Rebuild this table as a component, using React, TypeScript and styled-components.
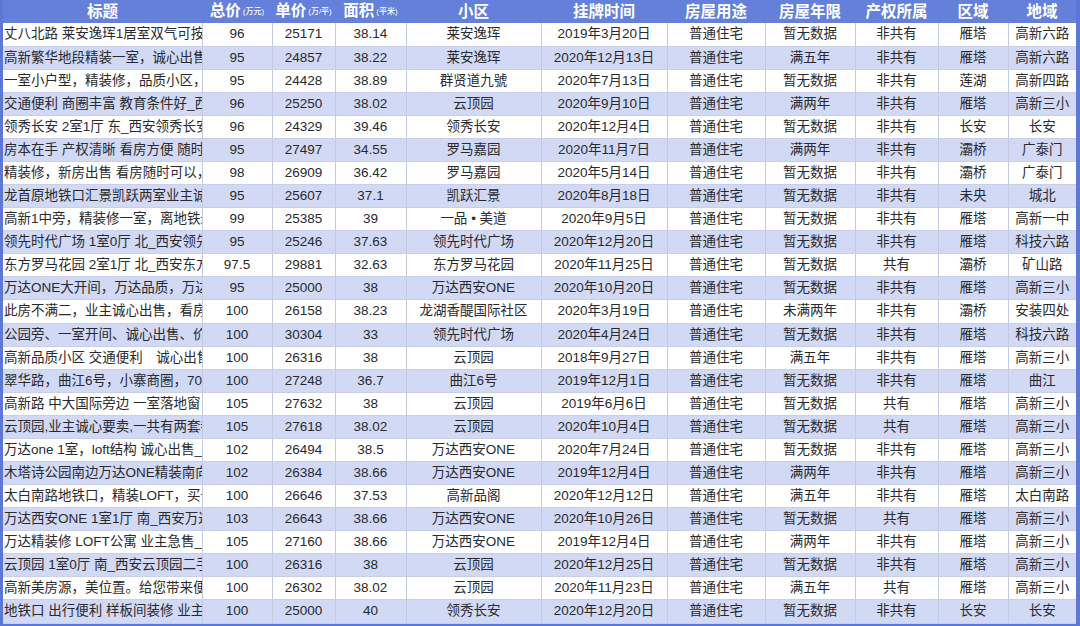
import React from 'react';
import styled, { createGlobalStyle } from 'styled-components';

const GlobalStyle = createGlobalStyle`
  html, body {
    margin: 0;
    padding: 0;
    background: #ffffff;
  }
  body {
    font-family: "Liberation Sans", "Noto Sans CJK SC", sans-serif;
  }
`;

const Frame = styled.div`
  width: 1080px;
  height: 626px;
  box-sizing: border-box;
  padding: 0 4px 4px 3px;
  background: #5d77d6;
  overflow: hidden;
`;

const Table = styled.table`
  width: 1073px;
  table-layout: fixed;
  border-collapse: collapse;
  border-spacing: 0;
  color: #2a2a2e;
`;

const HeadRow = styled.tr`
  height: 22px;
  background: #6480da;
`;

const HeadCell = styled.th`
  padding: 0;
  font-size: 15.5px;
  font-weight: 600;
  color: #ffffff;
  text-align: center;
  white-space: nowrap;
  overflow: hidden;
  line-height: 22px;
`;

const Unit = styled.span`
  font-size: 8px;
  font-weight: 500;
  margin-left: 2px;
  vertical-align: 2px;
`;

const Row = styled.tr<{ $alt: boolean }>`
  height: 23.08px;
  background: ${p => (p.$alt ? '#d1d9f5' : '#ffffff')};
`;

const Cell = styled.td<{ $left?: boolean }>`
  padding: ${p => (p.$left ? '0 0 0 1px' : '0')};
  font-size: 13.5px;
  line-height: 22px;
  text-align: ${p => (p.$left ? 'left' : 'center')};
  white-space: nowrap;
  overflow: hidden;
  text-overflow: clip;
  border-right: 1px solid #c4cae2;
  border-bottom: 1px solid #c9cfe8;
  &:last-child {
    border-right: none;
  }
`;

const columns: { title: string; unit?: string; width: number }[] = [
  { title: '标题', width: 199 },
  { title: '总价', unit: '(万元)', width: 70 },
  { title: '单价', unit: '(万/平)', width: 63 },
  { title: '面积', unit: '(平米)', width: 71 },
  { title: '小区', width: 135 },
  { title: '挂牌时间', width: 126 },
  { title: '房屋用途', width: 98 },
  { title: '房屋年限', width: 90 },
  { title: '产权所属', width: 83 },
  { title: '区域', width: 70 },
  { title: '地域', width: 68 },
];

// 标题, 总价, 单价, 面积, 小区, 挂牌时间, 年限, 产权, 区域, 地域
const rows: string[][] = [
  ['丈八北路 莱安逸珲1居室双气可按揭', '96', '25171', '38.14', '莱安逸珲', '2019年3月20日', '暂无数据', '非共有', '雁塔', '高新六路'],
  ['高新繁华地段精装一室，诚心出售', '95', '24857', '38.22', '莱安逸珲', '2020年12月13日', '满五年', '非共有', '雁塔', '高新六路'],
  ['一室小户型，精装修，品质小区，', '95', '24428', '38.89', '群贤道九號', '2020年7月13日', '暂无数据', '非共有', '莲湖', '高新四路'],
  ['交通便利 商圈丰富 教育条件好_西安', '96', '25250', '38.02', '云顶园', '2020年9月10日', '满两年', '非共有', '雁塔', '高新三小'],
  ['领秀长安 2室1厅 东_西安领秀长安', '96', '24329', '39.46', '领秀长安', '2020年12月4日', '暂无数据', '非共有', '长安', '长安'],
  ['房本在手 产权清晰 看房方便 随时看', '95', '27497', '34.55', '罗马嘉园', '2020年11月7日', '满两年', '非共有', '灞桥', '广泰门'],
  ['精装修，新房出售 看房随时可以，', '98', '26909', '36.42', '罗马嘉园', '2020年5月14日', '暂无数据', '非共有', '灞桥', '广泰门'],
  ['龙首原地铁口汇景凯跃两室业主诚心', '95', '25607', '37.1', '凯跃汇景', '2020年8月18日', '暂无数据', '非共有', '未央', '城北'],
  ['高新1中旁，精装修一室，离地铁近', '99', '25385', '39', '一品 • 美道', '2020年9月5日', '暂无数据', '非共有', '雁塔', '高新一中'],
  ['领先时代广场 1室0厅 北_西安领先', '95', '25246', '37.63', '领先时代广场', '2020年12月20日', '暂无数据', '非共有', '雁塔', '科技六路'],
  ['东方罗马花园 2室1厅 北_西安东方', '97.5', '29881', '32.63', '东方罗马花园', '2020年11月25日', '暂无数据', '共有', '灞桥', '矿山路'],
  ['万达ONE大开间，万达品质，万达', '95', '25000', '38', '万达西安ONE', '2020年10月20日', '暂无数据', '非共有', '雁塔', '高新三小'],
  ['此房不满二，业主诚心出售，看房', '100', '26158', '38.23', '龙湖香醍国际社区', '2020年3月19日', '未满两年', '非共有', '灞桥', '安装四处'],
  ['公园旁、一室开间、诚心出售、价格', '100', '30304', '33', '领先时代广场', '2020年4月24日', '暂无数据', '非共有', '雁塔', '科技六路'],
  ['高新品质小区 交通便利　诚心出售', '100', '26316', '38', '云顶园', '2018年9月27日', '满五年', '非共有', '雁塔', '高新三小'],
  ['翠华路，曲江6号，小寨商圈，70年', '100', '27248', '36.7', '曲江6号', '2019年12月1日', '暂无数据', '非共有', '雁塔', '曲江'],
  ['高新路 中大国际旁边 一室落地窗', '105', '27632', '38', '云顶园', '2019年6月6日', '暂无数据', '共有', '雁塔', '高新三小'],
  ['云顶园,业主诚心要卖,一共有两套都', '105', '27618', '38.02', '云顶园', '2020年10月4日', '暂无数据', '共有', '雁塔', '高新三小'],
  ['万达one 1室，loft结构 诚心出售_', '102', '26494', '38.5', '万达西安ONE', '2020年7月24日', '暂无数据', '非共有', '雁塔', '高新三小'],
  ['木塔诗公园南边万达ONE精装南向', '102', '26384', '38.66', '万达西安ONE', '2019年12月4日', '满两年', '非共有', '雁塔', '高新三小'],
  ['太白南路地铁口，精装LOFT，买一', '100', '26646', '37.53', '高新品阁', '2020年12月12日', '满五年', '非共有', '雁塔', '太白南路'],
  ['万达西安ONE 1室1厅 南_西安万达', '103', '26643', '38.66', '万达西安ONE', '2020年10月26日', '暂无数据', '共有', '雁塔', '高新三小'],
  ['万达精装修 LOFT公寓 业主急售_', '105', '27160', '38.66', '万达西安ONE', '2019年12月4日', '满两年', '非共有', '雁塔', '高新三小'],
  ['云顶园 1室0厅 南_西安云顶园二手', '100', '26316', '38', '云顶园', '2020年12月25日', '暂无数据', '非共有', '雁塔', '高新三小'],
  ['高新美房源，美位置。给您带来便利', '100', '26302', '38.02', '云顶园', '2020年11月23日', '满五年', '共有', '雁塔', '高新三小'],
  ['地铁口 出行便利 样板间装修 业主', '100', '25000', '40', '领秀长安', '2020年12月20日', '暂无数据', '非共有', '长安', '长安'],
];

export default function App() {
  return (
    <>
      <GlobalStyle />
      <Frame>
        <Table>
          <colgroup>
            {columns.map(c => (
              <col key={c.title} style={{ width: c.width }} />
            ))}
          </colgroup>
          <thead>
            <HeadRow>
              {columns.map(c => (
                <HeadCell key={c.title}>
                  {c.title}
                  {c.unit && <Unit>{c.unit}</Unit>}
                </HeadCell>
              ))}
            </HeadRow>
          </thead>
          <tbody>
            {rows.map((r, i) => {
              const cells = [...r.slice(0, 6), '普通住宅', ...r.slice(6)];
              return (
                <Row key={i} $alt={i % 2 === 1}>
                  {cells.map((v, j) => (
                    <Cell key={j} $left={j === 0}>
                      {v}
                    </Cell>
                  ))}
                </Row>
              );
            })}
          </tbody>
        </Table>
      </Frame>
    </>
  );
}
